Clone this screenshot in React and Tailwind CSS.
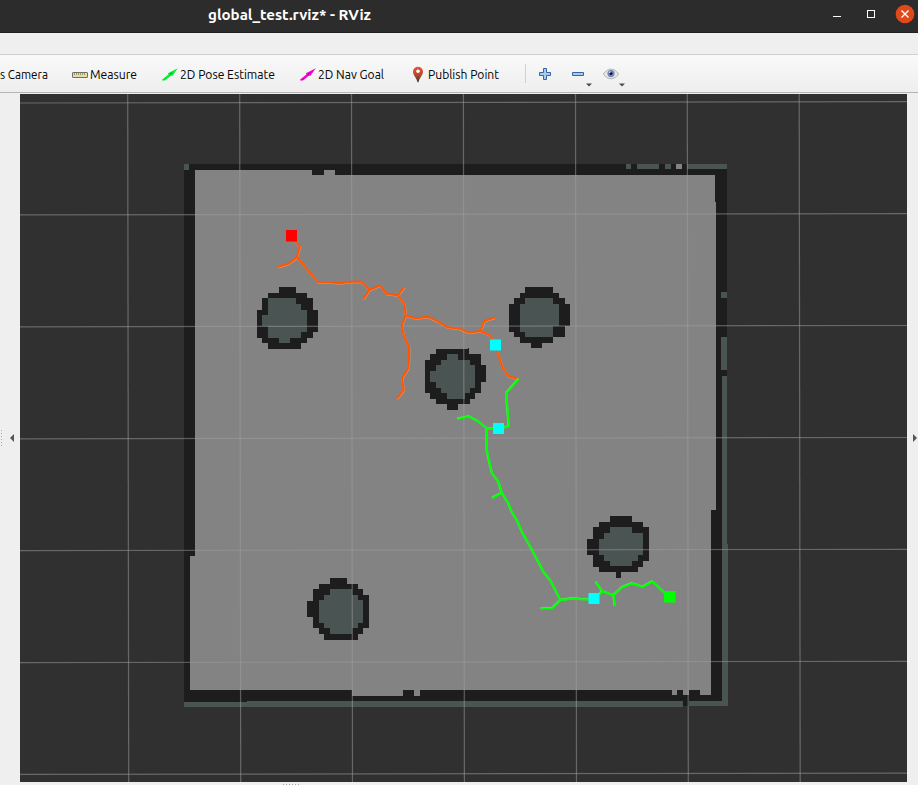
const DARK = '#1d1d1d';
const FREE = '#838383';
const TEAL = '#4a5452';

// Rows of grid cells: [y1, y2, x1, x2]
const obstacles = [
  {
    wall: [[287,293,279,296],[293,299,268,307],[298,310,262,313],[310,332,257,318],[332,338,257,313],[338,343,262,307],[343,349,268,301]],
    core: [[298,304,268,296],[304,310,268,301],[310,332,268,307],[315,326,262,268],[332,338,268,301],[338,343,279,290]],
  },
  {
    wall: [[287,293,525,553],[293,298,520,559],[298,304,514,565],[304,326,509,570],[326,332,509,565],[332,337,514,565],[337,343,520,553],[343,348,531,542]],
    core: [[298,304,525,553],[304,326,520,559],[326,332,520,553],[332,337,525,553]],
  },
  {
    wall: [[348,349,468,469],[349,354,436,469],[354,360,430,481],[360,365,425,481],[365,382,425,486],[382,393,425,481],[393,399,430,475],[399,404,436,470],[404,410,447,458]],
    core: [[354,360,447,458],[360,365,441,470],[365,371,436,475],[371,382,430,475],[382,388,436,475],[388,393,441,470],[393,399,447,465]],
  },
  {
    wall: [[516,522,610,632],[522,527,599,643],[527,539,593,649],[539,555,587,649],[555,561,593,649],[561,567,593,643],[567,572,599,638],[572,578,616,621]],
    core: [[527,533,610,632],[533,539,604,643],[539,555,599,643],[555,561,604,638],[561,566,610,632]],
  },
  {
    wall: [[578,584,330,347],[584,589,319,358],[589,595,313,363],[595,601,313,369],[601,617,307,369],[617,628,313,369],[628,634,319,363],[634,640,324,358]],
    core: [[589,595,330,352],[595,600,324,358],[600,623,319,363],[623,628,324,358],[628,634,330,352]],
  },
];

const tealCells = [
  [164,170,184,189],[164,169,626,631],[164,169,637,659],[164,169,665,671],[164,169,687,727],
  [292,298,721,727],[337,370,721,727],[376,706,722,727],[544,706,722,728],
  [702,707,184,247],[701,707,247,683],[701,706,689,728],
];

const orange = [
  '295,241.5 300,246 297,257 318,282.3 329,282.3 340,283.3 351,281.7 362,281.7 369.5,289.7 380,285.5 387,294 398,295.3 404.5,304 405.7,316 416.7,318.3 427.7,316.7 438.3,321.7 447.7,327.3 459.3,328.7 469,332.7 480.3,331 490,335.3 493,340',
  '297,257 289,263.5 277.5,267',
  '369.5,289.7 363.5,299',
  '398,295.3 404.3,287',
  '480.3,331 484.3,321 494.7,317.5',
  '405.7,316 401.7,325.3 404,336.7 409,346.7 409,360 408.3,368.3 402,378.3 403.7,390 397,398.7',
  '497,351 502.3,366.7 508.3,376.3 518.3,378.7',
];

const green = [
  '518.5,378.7 506.7,392.3 506.7,402 508.7,426 504,427.5',
  '494,428.3 486.7,428.3 478.3,421.3 468.7,416.3 457.3,418.7',
  '486.7,428.3 486.7,450 488.7,460 492,473.3 498.3,481.7 501.7,492.7 508.3,503.3 512,512.7 516.7,520 522.3,532.7 531.7,549.3 543.3,571.7 550.7,581 560.3,600 572.7,598.2 580,599 589,599.3',
  '501.7,492.7 492,497.7',
  '560.3,600 552.3,607.9 540.7,608.3',
  '599,594.5 602,591 613.3,595 621.7,587.3 631.7,583 642.3,586.7 652.3,581.3 665,593',
  '602,591 595.7,581.7',
  '613.3,595 614.7,605.7',
];

function Cells({ rows, fill }) {
  return (
    <g fill={fill} shapeRendering="crispEdges">
      {rows.map(([y1, y2, x1, x2], i) => (
        <rect key={i} x={x1} y={y1} width={x2 - x1} height={y2 - y1} />
      ))}
    </g>
  );
}

// Each branch is a solid line over a paler copy that shows along one side.
function Branches({ lines, color, edge, dx, dy }) {
  return (
    <g fill="none" strokeLinejoin="round">
      <g transform={`translate(${dx} ${dy})`} stroke={edge} strokeWidth="2.1">
        {lines.map((p, i) => (
          <polyline key={i} points={p} />
        ))}
      </g>
      <g stroke={color} strokeWidth="2">
        {lines.map((p, i) => (
          <polyline key={i} points={p} />
        ))}
      </g>
    </g>
  );
}

function MapView() {
  return (
    <svg className="block h-[688px] w-[887px]" viewBox="20 94 887 688">
      <rect x="20" y="94" width="887" height="688" fill="#303030" />
      <rect x="184" y="164" width="543" height="542" fill={DARK} />
      <path
        shapeRendering="crispEdges"
        fill={FREE}
        d="M195 170H312V175H324V170H335V175H715V202H716V510H711V695H700V690H689V695H683V690H677V695H672V690H420V696H414V690H403V696H352V690H190V556H195Z"
      />
      <Cells rows={[[164,169,676,682]]} fill={FREE} />
      <Cells rows={tealCells} fill={TEAL} />
      {obstacles.map((o, i) => (
        <g key={i}>
          <Cells rows={o.wall} fill={DARK} />
          <Cells rows={o.core} fill={TEAL} />
        </g>
      ))}
      <g stroke="#a0a0a4" strokeOpacity="0.5" strokeWidth="1.2">
        {[127.7, 239.7, 351.5, 463.4, 575.5, 687.3, 799.2].map((x) => (
          <line key={x} x1={x} y1="94" x2={x + 1} y2="782" />
        ))}
        {[103, 214.9, 326.8, 438.8, 550.6, 662.6, 774.4].map((y) => (
          <line key={y} x1="20" y1={y} x2="907" y2={y - 1.3} />
        ))}
      </g>
      <Branches lines={orange} color="#ff5500" edge="#f39468" dx={0.3} dy={0.5} />
      <g transform="translate(.3 .3)">
        <Branches lines={green} color="#00ff00" edge="#66ee66" dx={-0.4} dy={-0.4} />
      </g>
      <rect x="286" y="230" width="11" height="11.5" fill="#ff0000" />
      <rect x="490" y="339.5" width="11" height="11" fill="#00ffff" />
      <rect x="493" y="423" width="11" height="11" fill="#00ffff" />
      <rect x="588.5" y="593" width="11" height="11" fill="#00ffff" />
      <rect x="664" y="591" width="11.5" height="11.5" fill="#00ff00" />
    </svg>
  );
}

function Ruler() {
  return (
    <svg width="16" height="16" viewBox="0 0 16 16">
      <rect x=".5" y="5.5" width="15" height="5" rx=".5" fill="#e8dda5" stroke="#70706a" />
      <path d="M2.5 6v2M4.5 6v2M6.5 6v2M8.5 6v2M10.5 6v2M12.5 6v2" stroke="#8a8468" strokeWidth=".8" />
    </svg>
  );
}

function Arrow({ color }) {
  return (
    <svg width="16" height="16" viewBox="0 0 16 16">
      <path d="M.2 12.6 6.4 7.4 6 6.2 15.8 1.2 10.4 8.8 8.800 8.800 3 13.400H.2Z" fill={color} />
      <path d="m8 7.400 2-1.600" stroke="#222" strokeOpacity=".5" strokeWidth="1" />
    </svg>
  );
}

function Pin() {
  return (
    <svg width="12" height="17" viewBox="0 0 12 17">
      <defs>
        <linearGradient id="pin" x1="0" y1="0" x2="0" y2="1">
          <stop offset="0" stopColor="#e8553a" />
          <stop offset=".5" stopColor="#b8492c" />
          <stop offset="1" stopColor="#3a3a20" />
        </linearGradient>
      </defs>
      <path d="M6 .8a5 5 0 0 1 5 5C11 9.4 7.6 11.3 6.5 16.3H5.5C4.4 11.3 1 9.4 1 5.8a5 5 0 0 1 5-5Z" fill="url(#pin)" />
      <circle cx="6" cy="5.3" r="1.8" fill="#fff" />
    </svg>
  );
}

function Caret({ className }) {
  return (
    <svg className={className} width="6" height="4" viewBox="0 0 6 4">
      <path d="M0 .5H6L3 3.5Z" fill="#4a4a4a" />
    </svg>
  );
}

function Label({ text, width }) {
  return (
    <svg className="block shrink-0 overflow-visible" width={width} height="16">
      <text x="0" y="12" textLength={width} lengthAdjust="spacingAndGlyphs" fill="#000" fontSize="12.5">{text}</text>
    </svg>
  );
}

export default function App() {
  return (
    <div className="flex h-[785px] w-[918px] flex-col overflow-hidden bg-[#efefef] font-[Ubuntu,'Noto_Sans',sans-serif]">
      <header className="flex h-[33px] shrink-0 items-center border-b border-[#202020] bg-[#2c2c2c] pb-[3px] text-white">
        <div className="ml-[208px] w-[164px]">
          <svg className="block overflow-visible" width="164" height="20">
            <text x="0" y="15" textLength="163" lengthAdjust="spacingAndGlyphs" fill="#fff" fontSize="14.5" fontWeight="700">global_test.rviz* - RViz</text>
          </svg>
        </div>
        <svg className="ml-auto block" width="90" height="30" viewBox="828 0 90 30">
          <path d="M833 16.5h8" stroke="#fff" />
          <rect x="867.5" y="10.5" width="7" height="7" fill="none" stroke="#fff" />
          <circle cx="905" cy="14" r="9.3" fill="#e2491a" />
          <path d="m901.5 10.5 7 7m0-7-7 7" stroke="#fff" strokeWidth="1.4" />
        </svg>
      </header>
      <div className="h-[22px] shrink-0 border-b border-[#d0d0d0]" />
      <nav className="flex h-[38px] shrink-0 items-center border-b border-[#b4b4b4] bg-linear-to-b from-[#f9f9f9] to-[#eeeeee] pt-[2px]">
        <Label text="s Camera" width={48} />
        <span className="ml-6 mr-[2px]"><Ruler /></span>
        <Label text="Measure" width={47} />
        <span className="ml-[25px] mr-[2px]"><Arrow color="#00f030" /></span>
        <Label text="2D Pose Estimate" width={95} />
        <span className="ml-[25px] mr-[2px]"><Arrow color="#f000d0" /></span>
        <Label text="2D Nav Goal" width={66} />
        <span className="ml-[28px] mr-[4px]"><Pin /></span>
        <Label text="Publish Point" width={71} />
        <div className="flex items-center pb-[2px]">
          <span className="ml-[26px] h-[19px] w-px bg-[#d0d0d0]" />
          <svg className="ml-3" width="14" height="14" viewBox="0 0 14 14">
            <path d="M5.5 1.5h3v4h4v3h-4v4h-3v-4h-4v-3h4Z" fill="#a9c9ea" stroke="#3465a4" />
          </svg>
          <span className="relative ml-5 flex">
            <svg width="13" height="14" viewBox="0 0 13 14">
              <path d="M.5 5.5h11v3H.5Z" fill="#a9c9ea" stroke="#3465a4" />
            </svg>
            <Caret className="absolute -right-[7px] -bottom-[6px]" />
          </span>
          <span className="relative ml-[18px] flex">
            <svg width="16" height="14" viewBox="0 0 16 14">
              <path d="M.3 7C3 3.5 5.5 2.2 8 2.2S13 3.5 15.7 7C13 10.5 10.5 11.8 8 11.8S3 10.5.3 7Z" fill="#e8e8e8" stroke="#a5a5a5" strokeWidth=".8" />
              <circle cx="8" cy="6.6" r="3.6" fill="#7189bd" />
              <circle cx="8" cy="6.6" r="1.5" fill="#10172c" />
              <circle cx="6.8" cy="5.2" r=".7" fill="#fff" />
            </svg>
            <Caret className="absolute -right-[6px] -bottom-[6px]" />
          </span>
        </div>
      </nav>
      <main className="flex h-[689px] shrink-0 pt-px">
        <div className="flex w-5 items-center justify-between">
          <div className="flex flex-col gap-[2px]">
            {[0, 1, 2, 3, 4, 5].map((i) => (
              <i key={i} className="ml-px size-px bg-[#aaa]" />
            ))}
          </div>
          <svg className="mr-[6px]" width="4" height="8" viewBox="0 0 4 8">
            <path d="M4 0V8L0 4Z" fill="#555" />
          </svg>
        </div>
        <MapView />
        <div className="flex w-[11px] items-center">
          <svg className="ml-[6px]" width="4" height="8" viewBox="0 0 4 8">
            <path d="M0 0V8L4 4Z" fill="#555" />
          </svg>
        </div>
      </main>
      <div className="flex flex-1 items-end gap-[2px] pl-[283px]">
        {[0, 1, 2, 3, 4, 5].map((i) => (
          <i key={i} className="size-px bg-[#aaa]" />
        ))}
      </div>
    </div>
  );
}
